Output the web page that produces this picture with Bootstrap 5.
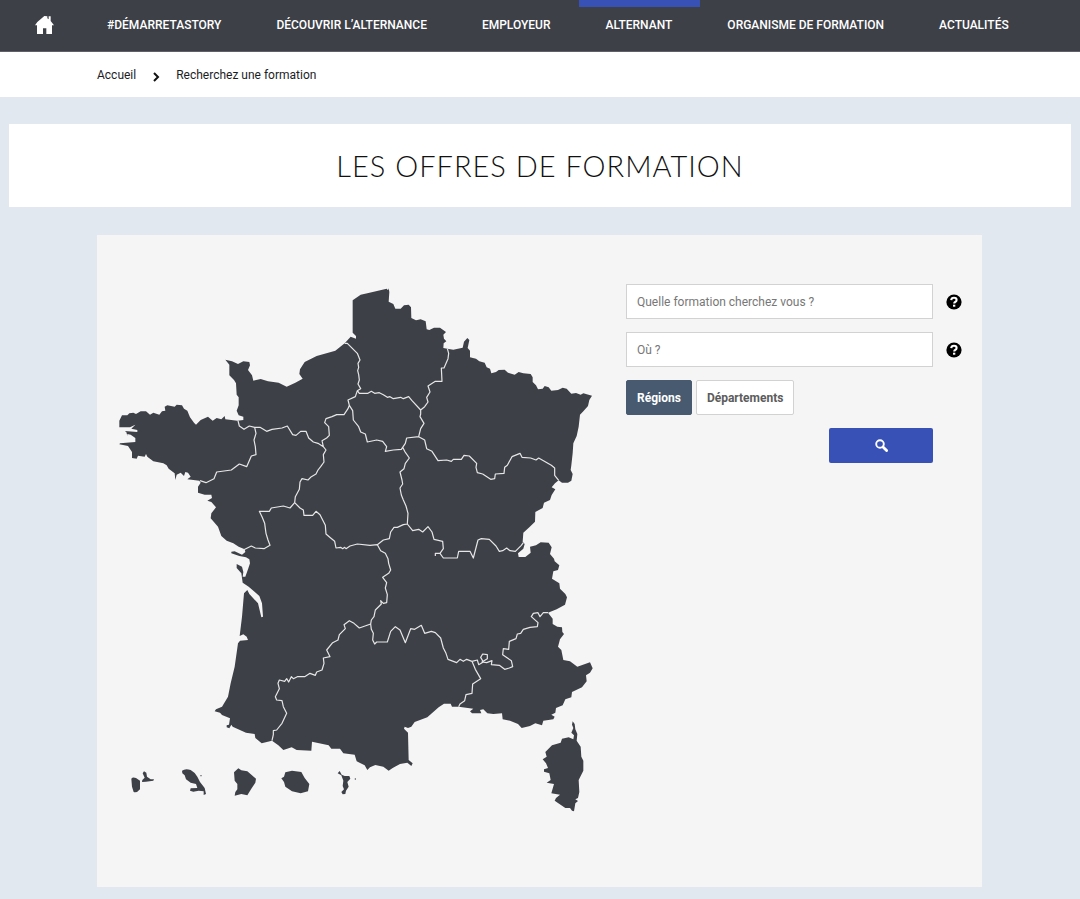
<!DOCTYPE html>
<html lang="fr">
<head>
<meta charset="utf-8">
<meta name="viewport" content="width=device-width, initial-scale=1">
<title>Les offres de formation</title>
<link href="https://cdn.jsdelivr.net/npm/bootstrap@5.3.0/dist/css/bootstrap.min.css" rel="stylesheet">
<style>
  body { background: #e1e8f0; color: #1c1d1f; font-family: Roboto, sans-serif; font-size: 12px; line-height: 18px; }
  .site-nav { background: #3d4047; border-bottom: 1px solid #61606a; }
  .site-nav .nav-link { color: #fff; font-size: 12px; font-weight: 500; line-height: 18px; padding: 9px 28px 17px 27px; border-top: 7px solid transparent; text-transform: uppercase; white-space: nowrap; }
  .site-nav .nav-link.active { border-top-color: #3751b7; }
  .site-nav .home-link { padding-left: 35px; padding-right: 26px; }
  .crumbs { padding: 14px 97px 13px; }
  .crumbs a { color: #1c1d1f; }
  .page-head { margin: 27px 9px 28px; padding: 24px 0; }
  .page-head h1 { font-family: Lato, sans-serif; font-weight: 300; font-size: 29px; line-height: 35px; letter-spacing: 1px; color: #111; }
  .search-zone { margin: 0 98px 12px 97px; padding: 45px 20px 67px 13px; background: #f5f5f5; }
  .map-col { flex: 0 1 490px; min-width: 300px; }
  .form-col { flex: 1 1 300px; padding: 4px 0 0 26px; }
  .form-row { margin-bottom: 13px; }
  .form-col .form-control { height: 35px; padding: 0 10px; font-size: 12px; border: 1px solid #d2d2d2; border-radius: 0; color: #555; }
  .form-col .form-control::placeholder { color: #777; opacity: 1; }
  .help-btn { width: 16px; height: 16px; margin-left: 13px; line-height: 0; }
  .level-btn { height: 35px; padding: 0 10px; font-size: 12px; font-weight: 700; border-radius: 2px; background: #fff; border: 1px solid #d2d2d2; color: #5c5c5c; }
  .level-btn.active { background: #475a70 !important; border-color: #475a70 !important; color: #fff !important; }
  .search-btn { width: 104px; height: 35px; margin-right: 29px; border-radius: 2px; background: #3751b7; line-height: 0; }
  .land { fill: #3d4047; }
  .borders { fill: none; stroke: #e6e6e6; stroke-width: 3.6; stroke-linejoin: round; }
</style>
</head>
<body>
<nav class="site-nav" aria-label="Navigation principale">
  <ul class="nav flex-nowrap">
    <li class="nav-item"><a class="nav-link home-link" href="#" aria-label="Accueil">
      <svg class="d-block" width="19" height="18" viewBox="0 0 57 54" fill="#fff" aria-hidden="true"><path d="M28 0 37 1V7L41 10V1H47V15L57 28H51V54H34V37H24V54H6V28H0L7 18Z"/></svg></a></li>
    <li class="nav-item"><a class="nav-link" href="#">#démarretastory</a></li>
    <li class="nav-item"><a class="nav-link" href="#">Découvrir l’alternance</a></li>
    <li class="nav-item"><a class="nav-link" href="#">Employeur</a></li>
    <li class="nav-item"><a class="nav-link active" aria-current="page" href="#">Alternant</a></li>
    <li class="nav-item"><a class="nav-link" href="#">Organisme de formation</a></li>
    <li class="nav-item"><a class="nav-link" href="#">Actualités</a></li>
  </ul>
</nav>
<nav class="crumbs bg-white d-flex align-items-center" aria-label="Fil d’Ariane">
  <a class="text-decoration-none" href="#">Accueil</a>
  <svg class="mx-3 mt-1" width="8" height="10" viewBox="0 0 8 10" fill="none" stroke="#111" stroke-width="2" aria-hidden="true"><path d="M2 1 6 5 2 9"/></svg>
  <span>Recherchez une formation</span>
</nav>
<main>
  <header class="page-head bg-white text-center"><h1 class="m-0 text-uppercase">Les offres de formation</h1></header>
  <section class="search-zone d-flex flex-wrap flex-lg-nowrap align-items-start">
    <div class="map-col">
      <svg class="d-block w-100 h-auto" viewBox="0 0 1470 1620" role="img" aria-label="Carte des régions de France">
        <path class="land" d="M728 61 752 44 772 40 830 26 834 31 836 25 838 36 836 65 850 72 856 86 872 86 882 76 896 74 903 82 904 114 918 121 932 118 947 124 950 148 958 150 972 143 990 143 1008 156 1000 164 1002 176 1009 184 1001 190 1000 204 1012 206 1030 209 1058 203 1062 185 1072 174 1078 180 1073 204 1080 212 1080 232 1098 236 1108 244 1124 248 1130 262 1140 266 1144 280 1158 276 1166 270 1184 269 1194 278 1214 284 1226 276 1240 280 1262 282 1268 292 1268 306 1278 316 1284 328 1298 326 1304 318 1316 322 1324 332 1344 330 1358 323 1370 326 1384 341 1398 339 1412 344 1420 340 1446 347 1438 360 1434 378 1420 394 1410 404 1406 440 1400 468 1390 490 1388 520 1384 556 1382 570 1388 582 1384 602 1374 608 1356 608 1346 601 1335 610 1325 622 1336 628 1325 645 1320 660 1302 668 1298 684 1276 696 1275 725 1258 742 1240 758 1238 785 1244 792 1240 806 1224 820 1226 831 1246 831 1262 818 1260 800 1278 796 1292 787 1316 788 1325 802 1320 822 1332 836 1334 844 1348 856 1344 870 1330 874 1326 896 1348 910 1350 926 1366 942 1371 952 1365 974 1340 988 1314 998 1328 1016 1328 1032 1342 1040 1356 1042 1357 1056 1362 1062 1350 1078 1344 1100 1354 1110 1360 1140 1380 1144 1402 1160 1440 1147 1448 1165 1440 1178 1428 1186 1430 1204 1416 1222 1386 1236 1384 1252 1366 1258 1358 1276 1338 1284 1336 1298 1324 1304 1334 1310 1330 1318 1300 1322 1296 1336 1276 1330 1260 1338 1235 1344 1224 1332 1200 1322 1178 1318 1176 1300 1150 1302 1132 1300 1120 1288 1110 1290 1114 1300 1086 1300 1080 1294 1090 1286 1046 1280 1026 1280 1022 1271 1002 1271 986 1282 952 1312 914 1326 904 1340 894 1344 884 1340 882 1346 894 1358 896 1440 908 1450 904 1458 892 1448 870 1452 848 1464 836 1472 820 1460 796 1455 780 1462 772 1470 764 1456 740 1444 734 1424 700 1420 690 1406 664 1406 656 1396 606 1385 604 1412 560 1410 545 1402 520 1410 505 1396 486 1382 455 1390 436 1374 434 1362 408 1358 368 1340 364 1334 358 1345 350 1342 350 1336 357 1334 360 1315 336 1305 330 1298 314 1294 318 1288 336 1280 354 1250 362 1210 374 1160 384 1090 390 1082 414 1080 410 1070 400 1063 389 1068 396 1010 402 940 412 930 418 942 444 970 454 1012 459 1010 456 970 448 948 416 920 398 908 394 880 380 864 380 852 396 860 400 876 398 890 406 890 414 868 420 850 418 838 408 832 388 828 364 820 364 815 374 814 396 824 406 816 404 808 386 800 370 790 350 782 334 768 324 740 302 715 304 700 318 682 304 666 292 662 306 654 304 644 284 644 264 638 264 620 272 608 268 602 232 598 242 590 234 578 226 576 222 588 212 578 200 584 196 600 194 580 176 566 170 556 160 550 130 544 112 530 108 522 104 530 84 527 80 536 66 534 66 516 54 498 28 493 30 490 76 486 76 474 62 464 52 462 52 468 49 456 44 453 82 456 82 450 64 446 76 434 60 442 28 442 28 422 36 406 52 406 58 400 70 398 78 402 92 394 108 394 120 404 130 398 148 404 156 394 166 392 164 380 172 376 194 380 200 374 216 376 222 386 232 392 240 412 252 428 258 434 272 420 294 410 308 422 320 414 334 418 344 408 346 418 382 422 400 420 400 410 386 406 380 392 386 376 386 352 380 344 378 310 372 300 358 286 358 254 346 239 366 244 384 252 400 244 418 246 420 256 414 270 426 286 430 302 452 297 474 304 506 308 530 320 556 308 578 296 568 282 570 268 584 246 620 228 676 212 704 190 722 170 738 176 738 168 728 158Z"/>
        <g transform="translate(780 960)"><path class="land" d="M608 364 614 372 616 388 622 402 620 422 632 440 634 470 640 482 640 512 626 540 628 576 624 594 616 598 624 603 616 610 612 634 606 632 600 624 586 624 554 602 558 594 570 584 544 580 552 552 530 548 542 540 538 520 522 515 522 508 534 504 528 490 518 478 530 470 526 456 532 450 546 436 572 428 576 416 596 412 610 418 612 406 604 398 610 384 606 374Z"/></g>
        <g class="land" transform="translate(0 1320)">
          <path d="M64 176Q68 170 78 174L90 182 90 208Q80 220 71 216L66 200ZM98 160 102 154 109 158 111 170 122 178 132 178 130 182 108 185 96 186 97 180 104 173Z"/>
          <path d="M216 152Q226 144 242 150 256 158 262 170L270 186 284 204 288 222 281 225 281 214 266 212 250 215 240 212 242 205 262 204 258 192 242 188 228 178 224 166 217 160Z"/>
          <path d="M372 157 385 145 394 151 412 154 438 176 436 188 424 206 412 226 394 222 374 227 376 216 382 208 382 192 374 182Z"/>
          <path d="M514 175 522 170 526 157 546 152 574 156 584 174 598 192 594 214 572 220 546 214 526 200 522 186Z"/>
          <path d="M683 160 689 153 695 164 704 168 718 168 721 176 712 186 716 200 708 212 706 222 698 223 694 216 702 208 698 198 700 182 694 166Z"/>
          <circle cx="273" cy="167" r="2"/><circle cx="736" cy="177" r="2"/>
        </g>
        <path class="borders" d="M704 190 712 190 724 202 742 220 750 240 744 250 746 262 743 272 746 284 748 300 744 312 752 326 742 332 736 350 714 360 718 376 714 386 702 404 680 404 666 410 648 416 644 428 656 440 658 466 650 474 636 482 640 500 624 490 610 486 596 474 588 454 572 454 558 466 548 464 532 438 516 444 486 448 470 454 450 442 434 442 418 438 402 448 388 438 384 422
          M434 442 438 460 432 480 436 500 438 524 424 528 410 560 388 552 364 570 320 576 312 596 288 608 270 602
          M640 500 648 510 640 524 642 546 632 560 624 570 618 582 604 590 594 600 576 596 570 606 568 628 556 650 554 668
          M742 332 748 340 774 340 784 334 794 340 808 338 820 344 832 352 840 350 850 356 872 352 880 356 896 350 906 362 932 390 932 402 930 410 942 430 932 446 926 470 890 474 886 490 878 502 874 508 850 510 826 514 830 500 818 484 800 480 772 486 766 462 752 456 746 440 730 420 728 392 718 376
          M1012 206 1016 220 1014 236 1002 264 994 264 996 304 976 304 954 318 960 336 950 352 954 366 944 380 932 390
          M926 470 944 480 950 506 966 514 984 542 1010 540 1024 544 1030 538 1054 538 1062 526 1078 528 1100 550 1098 562 1102 578 1118 582 1142 598 1154 596 1156 582 1182 580 1184 562 1192 556 1206 530 1230 520 1236 532 1262 534 1278 540 1286 534 1324 556 1334 564 1334 586 1346 601
          M878 502 884 514 898 534 886 550 882 566 870 576 876 600 878 612 870 624 874 645 880 660 888 678 894 700 892 732 880 734 862 742 852 742 842 756 838 776 820 780 802 794 780 796 742 792 720 798 708 806 704 802 698 806 692 802 678 804 674 784 662 774 648 762 646 736 630 704 618 694 608 706 582 706 580 690 570 684 554 668 540 684 520 678 484 684 478 694 448 694 456 710 464 730 468 760 474 780 480 796 462 806 436 804 424 798 400 810
          M892 732 908 752 926 748 938 756 954 740 966 756 972 778 998 784 1000 806 990 820 976 820 976 828M990 820 1000 834 1042 834 1046 814 1080 814 1090 834 1104 780 1114 776 1138 778 1158 798 1168 814 1178 812 1190 804 1200 812 1216 814 1234 796 1240 788
          M802 794 812 812 826 820 834 836 836 850 842 870 836 880 818 892 830 908 826 924 832 944 830 968 820 970 812 962 814 972 796 990 792 1010 784 1020 782 1032 748 1044 732 1030 718 1022 702 1034 706 1046 688 1064 684 1080 668 1088 650 1110 660 1130 640 1134 642 1150 636 1170 620 1176 616 1186 600 1180 584 1190 562 1190 550 1196 544 1190 536 1206 530 1196 524 1204 508 1200 504 1210 508 1226 496 1250 500 1260 516 1262 520 1280 530 1300 516 1330 500 1350 490 1352 490 1364 486 1382
          M782 1032 784 1048 790 1060 788 1080 794 1092 800 1086 832 1086 842 1054 856 1040 870 1050 886 1088 902 1046 914 1048 934 1036 944 1060 964 1054 976 1058 992 1074 1000 1104 1008 1120 1014 1138 1040 1148 1050 1138 1060 1144 1070 1138 1086 1144 1096 1168 1112 1196 1088 1212 1086 1240 1068 1244 1064 1262 1050 1272 1046 1280
          M1086 1144 1102 1140 1106 1154 1120 1146 1112 1132 1118 1122 1132 1124 1132 1136 1116 1146 1130 1148 1146 1142 1144 1154 1168 1156 1184 1168 1198 1164 1208 1160 1204 1142 1178 1124 1180 1106 1196 1108 1198 1084 1218 1076 1222 1062 1232 1060 1240 1048 1260 1042 1282 1040 1284 1028 1264 1010 1270 1000 1284 998 1290 1010 1300 998 1314 998"/>
      </svg>
    </div>
    <form class="form-col">
      <div class="form-row d-flex align-items-center">
        <input class="form-control" type="text" placeholder="Quelle formation cherchez vous ?" aria-label="Quelle formation cherchez vous ?">
        <button class="btn border-0 p-0 help-btn flex-shrink-0" type="button" aria-label="Aide formation"><svg width="16" height="16" viewBox="0 0 16 16" aria-hidden="true"><circle cx="8" cy="8" r="7.6"/><path d="M5.2 6.2Q5.4 3.8 8 3.8 10.6 3.8 10.6 6 10.6 7.4 9.2 8 8.2 8.5 8.2 9.6" fill="none" stroke="#fff" stroke-width="2.1"/><path d="M7 10.7h2.3v2H7z" fill="#fff"/></svg></button>
      </div>
      <div class="form-row d-flex align-items-center">
        <input class="form-control" type="text" placeholder="Où ?" aria-label="Où ?">
        <button class="btn border-0 p-0 help-btn flex-shrink-0" type="button" aria-label="Aide lieu"><svg width="16" height="16" viewBox="0 0 16 16" aria-hidden="true"><circle cx="8" cy="8" r="7.6"/><path d="M5.2 6.2Q5.4 3.8 8 3.8 10.6 3.8 10.6 6 10.6 7.4 9.2 8 8.2 8.5 8.2 9.6" fill="none" stroke="#fff" stroke-width="2.1"/><path d="M7 10.7h2.3v2H7z" fill="#fff"/></svg></button>
      </div>
      <div class="form-row d-flex gap-1">
        <button class="btn level-btn active" type="button" aria-pressed="true">Régions</button>
        <button class="btn level-btn" type="button" aria-pressed="false">Départements</button>
      </div>
      <div class="d-flex justify-content-end">
        <button class="btn border-0 p-0 search-btn" type="submit" aria-label="Rechercher"><svg width="13" height="13" viewBox="0 0 13 13" fill="none" stroke="#fff" aria-hidden="true"><circle cx="5" cy="5" r="3.8" stroke-width="1.9"/><path d="M8 8 11.6 11.6" stroke-width="2.8" stroke-linecap="round"/></svg></button>
      </div>
    </form>
  </section>
</main>
<script src="https://cdn.jsdelivr.net/npm/bootstrap@5.3.0/dist/js/bootstrap.bundle.min.js"></script>
</body>
</html>
